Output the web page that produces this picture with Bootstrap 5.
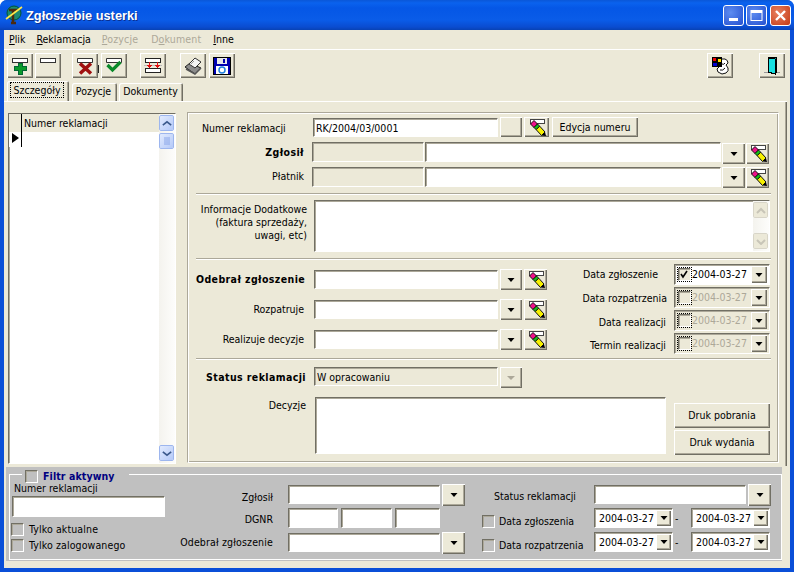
<!doctype html>
<html lang="pl"><head><meta charset="utf-8"><title>Zgłoszebie usterki</title>
<link href="https://cdn.jsdelivr.net/npm/bootstrap@5.3.0/dist/css/bootstrap.min.css" rel="stylesheet">
<style>
html,body{margin:0;width:794px;height:572px;overflow:hidden;background:#fff}
body{font:10.5px/13px "DejaVu Sans Condensed","Liberation Sans",sans-serif;color:#000;white-space:nowrap}
.okno{width:794px;height:572px;background:#0a4fd8;border-radius:7px 7px 0 0;overflow:hidden}
.pasek{height:30px;background:linear-gradient(#0a57d8 0,#0a62ee 3px,#0557e6 8px,#0a5ce8 20px,#0a4cd0 27px,#0842b4 30px);color:#fff;font:bold 13px "Liberation Sans",sans-serif;padding:0 3px 0 5px;text-shadow:1px 1px #0a2f90}
.pasek span{margin-left:3px;font-size:12.8px}
.okbtn{width:21px;height:21px;border:1px solid #fff;border-radius:3px;background:radial-gradient(circle at 35% 35%,#5d8cf0,#2450d0);margin-left:2px;padding:0;display:block}
.okbtn.zam{background:radial-gradient(circle at 35% 35%,#e8805f,#c43a14);margin-left:3px}
.klient{margin:0 4px;height:538px;background:#ece9d8}
.menu{height:20px;border-bottom:1px solid #fff;padding-left:5px;gap:11px}
.menu u{text-underline-offset:1px}
.menu .wyl{color:#aca899;letter-spacing:.15px}
.menu .mdok{margin-left:2px}.menu .minn{margin-left:1px}
.narz{height:31px;padding:3px 5px 0 3px}
.w95.btn{display:flex;align-items:center;justify-content:center;padding:0;border:0;border-radius:0;background:#ece9d8;color:#000;font:inherit;box-shadow:inset 1px 1px #fff,inset -1px -1px #716f64,inset -2px -2px #aca899}
.tb.btn{width:26px;height:25px}
.sp1{margin-left:2px}.sp2{margin-left:11px}.sp3{margin-left:13px}.sp4{margin-left:14px}.sp5{margin-left:3px}.sp6{margin-left:26px}
.kreska{width:1px;height:8px;background:#222;margin:4px 2px 0 0;align-self:center}
.zak{height:20px;padding-left:3px;border:0;position:relative;z-index:2}
.zak .nav-link{height:18px;margin:2px 2px 0 0;padding:2px 0;text-align:center;border:0;border-radius:2px 2px 0 0;color:#000;background:#ece9d8;box-shadow:inset 1px 1px #fff,inset -1px 0 #716f64,inset -2px 0 #aca899}
.zak .t2{width:45px;padding-right:2px}.zak .t3{width:64px;padding-right:1px}
.zak .nav-link.active{height:20px;margin:0 3px -1px 0;padding:3px 2px 0 0;width:62px;background:#ece9d8;color:#000;box-shadow:inset 1px 1px #fff,inset -1px 0 #716f64,inset -2px 0 #aca899}
.zak .nav-link.active span{outline:1px dotted #000;padding:1px 3px}
.arkusz{height:365px;margin-right:3px;border-top:1px solid #fff;box-shadow:inset -1px 0 #716f64,inset -2px 0 #aca899;padding:10px 0 0 4px}
.siatka{width:168px;height:351px;margin-top:1px;background:#fff;border:1px solid;border-color:#716f64 #fff #fff #716f64;box-shadow:inset 1px 1px #aca899}
.wsk{width:13px;border-right:1px solid #000;height:33px;flex:none;padding:19px 0 0 3px;background:linear-gradient(#ece9d8 18px,#fff 18px)}
.wsk i{display:block;width:0;height:0;border:5px solid transparent;border-left:7px solid #000;border-right:0}
.tyt{height:18px;padding:3px 0 0 2px;background:#ece9d8;flex:1}
.pas{width:16px;flex:none;background:linear-gradient(90deg,#f4f3ee,#fdfdfb);height:100%;padding-top:1px}
.sb{width:15px;height:16px;background:linear-gradient(135deg,#e2ebfe,#b4c9f8);border:1px solid #fff;outline:1px solid #9db6ee;outline-offset:-1px;border-radius:2px;display:flex;align-items:center;justify-content:center;margin-bottom:2px}
.sb.szary{background:#ece9d8;outline-color:#d8d5c8}
.panel{width:592px;height:351px;margin-left:11px;border:1px solid;border-color:#aca899 #fff #fff #aca899;box-shadow:inset 1px 1px #fff,inset -1px -1px #aca899;padding:0 8px}
.et{width:108px;flex:none;text-align:right}
.gr{font-weight:700;letter-spacing:.4px}
.pole.form-control{height:19px;min-height:0;padding:1px 2px;border-radius:0;border:1px solid;border-color:#716f64 #fff #fff #716f64;box-shadow:inset 1px 1px #aca899;background:#fff;font:inherit;color:#000;flex:none}
.pole.szare.form-control{background:#ece9d8}
.rn{margin-top:4px;height:20px}
.rz{margin-top:5px;height:22px}.rp{margin-top:3px;height:21px}
.sep{height:2px;background:#aca899;border-bottom:1px solid #fff;width:575px}
.s1{margin-top:5px}.s2{margin-top:6px}.s3{margin-top:4px}
.ri{margin-top:5px;height:52px}
.obsz{flex:none;border:1px solid;border-color:#716f64 #fff #fff #716f64;box-shadow:inset 1px 1px #aca899;background:#fff}
.trzy{height:90px;margin-top:4px}
.l3{padding-top:5px;gap:9px}
.wr{height:21px}
.d4{gap:2px;width:208px}
.dw{height:21px}
.dlb{flex:1;text-align:right;padding-right:8px;align-self:flex-start}
.dat{width:96px;height:21px;background:#fff;border:1px solid;border-color:#716f64 #fff #fff #716f64;box-shadow:inset 1px 1px #aca899;padding:2px 2px 2px 3px;flex:none}
.dat.off{background:#ece9d8;color:#aca899}
.dat .txt{flex:1;padding-left:1px}
.fc.form-check-input{width:13px;height:13px;margin:0;flex:none;border:1px solid;border-color:#716f64 #fff #fff #716f64;box-shadow:inset 1px 1px #aca899;border-radius:0;background:#ece9d8 none;opacity:1}
.fc.zazn.form-check-input:checked{background:#ece9d8 url("data:image/svg+xml,%3Csvg xmlns='http://www.w3.org/2000/svg' viewBox='0 0 11 11'%3E%3Cpath d='M2 5l2 3 4-6' fill='none' stroke='%23000' stroke-width='1.6'/%3E%3C/svg%3E") center/11px no-repeat}
.kropki{outline:1px dotted #000;outline-offset:0}
.dat .w95.btn{width:16px;height:17px}
.rs{margin-top:7px;height:22px}
.rd{margin-top:8px;height:59px}
.druk.btn{width:96px;height:25px}
.drcol{gap:2px;padding-top:6px;margin-left:8px}
.filtr{height:94px;margin:1px 8px 0 2px;background:#c0c0c0;padding:7px 0 0 3px;position:relative}
.grupa{height:86px;border:1px solid #fff;padding-left:2px}
.leg{position:absolute;left:16px;top:3px;background:#c0c0c0;padding:0 14px 0 3px;height:13px;color:#000080;font-weight:700;letter-spacing:.1px}
.leg .fc{margin-right:5px}
.k1{width:168px;padding-top:7px}
.k1 .pole.form-control{width:153px;height:21px;margin:0 0 6px 0}
.wl{height:13px;margin:0 0 3px -1px;gap:5px;letter-spacing:.12px}
.filtr .fc.form-check-input{background:#c0c0c0}
.k2{width:285px;padding-top:9px;margin-right:17px}
.fw{height:24px}
.fl{width:93px;flex:none;text-align:right;margin-right:15px}
.fl3{letter-spacing:.15px}
.k3{padding-top:9px;width:289px}
.f2{height:20px}
.fb.btn{width:23px;height:22px}
.dfil{width:79px;height:20px;background:#fff;border:1px solid;border-color:#716f64 #fff #fff #716f64;box-shadow:inset 1px 1px #aca899;padding:2px 1px 2px 4px;flex:none}
.dfil .w95.btn{width:15px;height:16px}
.dfil .txt{flex:1}
.myk{width:18px;flex:none;padding:4px 0 0 2px}
.fd{width:112px;flex:none;gap:4px;padding-top:6px}
svg{display:block;flex:none}
.nm1{width:185px;margin:1px 2px 0 9px}.nb1.btn{width:22px;height:20px;margin-right:2px}.nb2.btn{width:25px;height:20px;margin-right:3px}.nb3.btn{width:86px;height:20px}
.g1{width:112px;margin-left:8px;height:20px!important}.g2{width:296px;margin:0 1px;height:20px!important}.pd.btn{width:23px;height:21px;margin-right:1px}
.rz .pd.btn{margin-top:1px}
.inf{width:111px;padding-top:3px}.ta{width:456px;height:52px;margin-left:7px}
.w1{width:184px;margin:1px 2px 0 10px}.ww1.btn{width:22px;height:21px;margin-right:2px}.ww2.btn{width:23px;height:21px}
.od{padding-top:4px}.st{padding-top:4px;width:110px}.stp.form-control{margin:0 2px 0 8px}.dc{width:110px;padding-top:2px}.dz{width:351px;height:57px;margin-left:9px}
.nrl{height:14px;padding-left:2px}.fi{width:152px;margin:1px 2px 0 0;height:19px!important}.f1{width:50px;margin-right:3px;height:20px!important}.f3{width:51px;margin-right:3px;height:20px!important}.f4{width:45px;height:20px!important}
.st3{width:112px;padding:6px 0 0 12px;flex:none}.mt3{margin-top:4px}
.lbn{padding:5px 0 0 6px}.lz{padding-top:4px}.lp{padding-top:3px}
.p1{padding:4px 16px 0 0}.p2{padding:5px 7px 0 0}.p3{padding-top:6px}.p4{padding-top:6px}
.fl1{padding-top:7px}.fl2{padding-top:5px}.fl3{padding-top:4px}
</style></head><body>
<svg width="0" height="0" style="position:absolute"><defs>
<symbol id="ow" viewBox="0 0 7 4"><path d="M0 0h7L3.500 4z" fill="#000"/></symbol>
<symbol id="olowek" viewBox="0 0 18 17">
<path d="M2.500.500h14v4h-14z" fill="#fff" stroke="#444" shape-rendering="crispEdges"/>
<path d="M2.500 5l3.500-3.500L9.500 5 6 8.500z" fill="#f0108a" stroke="#111"/>
<path d="M6 8.500L9.500 5l2.200 2.200-3.500 3.500z" fill="#16c016" stroke="#111"/>
<path d="M8.200 10.700l3.500-3.500L17 13l-3.500 3.500z" fill="#f6f000" stroke="#111"/>
<path d="M13.500 16.500L17 13l1 4z" fill="#000"/></symbol>
<symbol id="pasb" viewBox="0 0 20 18"><path d="M2.500 1.500h15v4h-15z" fill="#fff" stroke="#333"/></symbol>
<symbol id="cd" viewBox="0 0 12 8"><path d="M1 6l5-4 5 4" fill="none" stroke="#3c5a8c" stroke-width="2"/></symbol>
<symbol id="cg" viewBox="0 0 12 8"><path d="M1 2l5 4 5-4" fill="none" stroke="#3c5a8c" stroke-width="2"/></symbol>
</defs></svg>
<div class="okno d-flex flex-column">
<div class="pasek d-flex align-items-center">
<svg width="18" height="20" viewBox="0 0 18 20"><circle cx="9" cy="8" r="7" fill="#1c8a70" stroke="#053"/><path d="M4 5h9M8 5v13M6 18h5" stroke="#4a2a10" stroke-width="2.500" fill="none"/><path d="M1 14L17 2" stroke="#ffe84a" stroke-width="1.600"/></svg>
<span>Zgłoszebie usterki</span>
<div class="d-flex ms-auto">
<button class="okbtn d-flex align-items-end justify-content-center" aria-label="min"><svg width="10" height="6" class="mb-1"><rect y="3" width="9" height="3" fill="#fff"/></svg></button>
<button class="okbtn d-flex align-items-center justify-content-center" aria-label="max"><svg width="13" height="13"><rect x="1" y="1.500" width="11" height="10" fill="none" stroke="#fff"/><rect x="1" y="1" width="11" height="3" fill="#fff"/></svg></button>
<button class="okbtn zam d-flex align-items-center justify-content-center" aria-label="zamknij"><svg width="13" height="13"><path d="M2 2l9 9M11 2l-9 9" stroke="#fff" stroke-width="2.400"/></svg></button>
</div></div>
<div class="klient">
<div class="menu d-flex align-items-center">
<span><u>P</u>lik</span><span><u>R</u>eklamacja</span><span class="wyl"><u>P</u>ozycje</span><span class="wyl mdok">D<u>o</u>kument</span><span class="minn"><u>I</u>nne</span>
</div>
<div class="narz d-flex">
<button class="w95 btn tb" aria-label="dodaj"><svg width="20" height="18" viewBox="0 0 20 18" shape-rendering="crispEdges"><use href="#pasb"/><path d="M8 6h4v3h4v4h-4v4H8v-4H4V9h4z" fill="#0a9a2a" stroke="#063"/></svg></button>
<button class="w95 btn tb sp1" aria-label="usuń"><svg width="20" height="18" viewBox="0 0 20 18" shape-rendering="crispEdges"><use href="#pasb"/></svg></button>
<button class="w95 btn tb sp2" aria-label="anuluj"><svg width="20" height="18" viewBox="0 0 20 18"><use href="#pasb"/><path d="M5 6.500l11 10M16 6.500L5 16.500" stroke="#a01010" stroke-width="3.500"/></svg></button>
<i class="kreska"></i>
<button class="w95 btn tb" aria-label="zatwierdź"><svg width="20" height="18" viewBox="0 0 20 18"><use href="#pasb"/><path d="M3.500 8l5 5 8-8" fill="none" stroke="#0a8a2a" stroke-width="3.200"/></svg></button>
<button class="w95 btn tb sp3" aria-label="wstaw"><svg width="18" height="18" viewBox="0 0 18 18" shape-rendering="crispEdges"><path d="M1.500 1.500h15v4h-15zM1.500 11.500h15v4h-15z" fill="#fff" stroke="#222"/><path d="M0 8.500h18" stroke="#bbb"/><path d="M5.500 5v6M13.500 5v6M3 8.500h5M11 8.500h5M4 9.500h3M12 9.500h3" stroke="#e01010"/></svg></button>
<button class="w95 btn tb sp4" aria-label="drukuj"><svg width="18" height="18" viewBox="0 0 18 18"><path d="M1 10l5-4 11 5-6 6z" fill="#8c8c8c" stroke="#222"/><path d="M5 7l6-6 6 4-6 6z" fill="#f4f4f4" stroke="#333"/><path d="M2 12l9 5 6-6" fill="none" stroke="#555" stroke-width="1.500"/><path d="M6 8l4-4" stroke="#999"/></svg></button>
<button class="w95 btn tb sp5" aria-label="zapisz"><svg width="18" height="18" viewBox="0 0 18 18" shape-rendering="crispEdges"><path d="M.5.500h17v17H.5z" fill="#0000b0" stroke="#000"/><path d="M4 1h10v6H4z" fill="#e8e8e8"/><path d="M10 2h2v4h-2z" fill="#0000b0"/><path d="M3 9h12v8H3z" fill="#fff"/><circle cx="9" cy="13" r="3" fill="none" stroke="#2080e0" stroke-width="1.500" shape-rendering="auto"/></svg></button>
<button class="w95 btn tb ms-auto" aria-label="telefon"><svg width="17" height="19" viewBox="0 0 17 19"><path d="M9 3h4q3 1 3 4l-2 2 2 3q1 3-2 5l-4 1-4-2-1-3 3-3" fill="#fff" stroke="#111"/><path d="M8 14q3 1 5-2M10 8q2 1 3-1" fill="none" stroke="#111"/><path d="M0 1h10v10H0z" fill="#000"/><path d="M1 2h3v3H1z" fill="#ee0000"/><path d="M6 3h3v3H6z" fill="#ffe000"/><path d="M1 7h4v3H1z" fill="#0000d0"/></svg></button>
<button class="w95 btn tb sp6" aria-label="wyjście"><svg width="18" height="19" viewBox="0 0 18 19" shape-rendering="crispEdges"><path d="M1 16.500h16" stroke="#999"/><path d="M5 1h8v15H5z" fill="#0f8f8f" stroke="#000"/><path d="M5 2l7 1v15l-7-2z" fill="#18e0e0" stroke="#000"/></svg></button>
</div>
<ul class="nav nav-tabs zak">
<li class="nav-item"><a class="nav-link active" href="#"><span>Szczegóły</span></a></li>
<li class="nav-item"><a class="nav-link t2" href="#">Pozycje</a></li>
<li class="nav-item"><a class="nav-link t3" href="#">Dokumenty</a></li>
</ul>
<div class="arkusz d-flex">
<div class="siatka d-flex">
<div class="d-flex flex-grow-1 align-items-start">
<div class="wsk"><i></i></div><div class="tyt">Numer reklamacji</div>
</div>
<div class="pas d-flex flex-column">
<div class="sb"><svg width="10" height="7"><use href="#cd"/></svg></div>
<div class="sb"><svg width="8" height="8"><path d="M1 1h6M1 3h6M1 5h6M1 7h6" stroke="#8aa6e8"/></svg></div>
<div class="sb mt-auto"><svg width="10" height="7"><use href="#cg"/></svg></div>
</div></div>
<div class="panel">
<div class="d-flex rn">
<div class="et text-start lbn">Numer reklamacji</div>
<input class="pole form-control nm1" value="RK/2004/03/0001" aria-label="Numer">
<button class="w95 btn nb1" aria-label="-"></button>
<button class="w95 btn nb2" aria-label="ołówek"><svg width="18" height="17"><use href="#olowek"/></svg></button>
<button class="w95 btn nb3">Edycja numeru</button>
</div>
<div class="d-flex rz">
<div class="et gr lz">Zgłosił</div>
<input class="pole szare form-control g1" aria-label="kod"><input class="pole form-control g2" aria-label="Zgłosił">
<button class="w95 btn pd" aria-label="rozwiń"><svg width="8" height="4"><use href="#ow"/></svg></button>
<button class="w95 btn pd" aria-label="ołówek"><svg width="18" height="17"><use href="#olowek"/></svg></button>
</div>
<div class="d-flex rp">
<div class="et lp">Płatnik</div>
<input class="pole szare form-control g1" aria-label="kod"><input class="pole form-control g2" aria-label="Płatnik">
<button class="w95 btn pd" aria-label="rozwiń"><svg width="8" height="4"><use href="#ow"/></svg></button>
<button class="w95 btn pd" aria-label="ołówek"><svg width="18" height="17"><use href="#olowek"/></svg></button>
</div>
<div class="sep s1"></div>
<div class="d-flex ri">
<div class="et inf">Informacje Dodatkowe<br>(faktura sprzedaży,<br>uwagi, etc)</div>
<div class="obsz d-flex justify-content-end ta">
<div class="pas d-flex flex-column"><div class="sb szary"><svg width="10" height="7"><path d="M1 6l4-4 4 4" fill="none" stroke="#c8c5b8" stroke-width="2"/></svg></div><div class="sb szary mt-auto"><svg width="10" height="7"><path d="M1 2l4 4 4-4" fill="none" stroke="#c8c5b8" stroke-width="2"/></svg></div></div>
</div></div>
<div class="sep s2"></div>
<div class="d-flex trzy">
<div class="d-flex flex-column l3">
<div class="d-flex wr"><div class="et gr od">Odebrał zgłoszenie</div><input class="pole form-control w1" aria-label="Odebrał"><button class="w95 btn ww1" aria-label="rozwiń"><svg width="8" height="4"><use href="#ow"/></svg></button><button class="w95 btn ww2" aria-label="ołówek"><svg width="18" height="17"><use href="#olowek"/></svg></button></div>
<div class="d-flex wr"><div class="et od">Rozpatruje</div><input class="pole form-control w1" aria-label="Rozpatruje"><button class="w95 btn ww1" aria-label="rozwiń"><svg width="8" height="4"><use href="#ow"/></svg></button><button class="w95 btn ww2" aria-label="ołówek"><svg width="18" height="17"><use href="#olowek"/></svg></button></div>
<div class="d-flex wr"><div class="et od">Realizuje decyzje</div><input class="pole form-control w1" aria-label="Realizuje"><button class="w95 btn ww1" aria-label="rozwiń"><svg width="8" height="4"><use href="#ow"/></svg></button><button class="w95 btn ww2" aria-label="ołówek"><svg width="18" height="17"><use href="#olowek"/></svg></button></div>
</div>
<div class="d-flex flex-column d4 ms-auto">
<div class="d-flex dw"><div class="dlb p1">Data zgłoszenie</div><div class="dat d-flex align-items-center"><input class="fc zazn kropki form-check-input" type="checkbox" checked aria-label="x"><span class="txt">2004-03-27</span><button class="w95 btn" aria-label="rozwiń"><svg width="8" height="4"><use href="#ow"/></svg></button></div></div>
<div class="d-flex dw"><div class="dlb p2">Data rozpatrzenia</div><div class="dat off d-flex align-items-center"><input class="fc kropki form-check-input" type="checkbox" aria-label="x"><span class="txt">2004-03-27</span><button class="w95 btn" aria-label="rozwiń"><svg width="8" height="4"><use href="#ow"/></svg></button></div></div>
<div class="d-flex dw"><div class="dlb p3">Data realizacji</div><div class="dat off d-flex align-items-center"><input class="fc kropki form-check-input" type="checkbox" aria-label="x"><span class="txt">2004-03-27</span><button class="w95 btn" aria-label="rozwiń"><svg width="8" height="4"><use href="#ow"/></svg></button></div></div>
<div class="d-flex dw"><div class="dlb p4">Termin realizacji</div><div class="dat off d-flex align-items-center"><input class="fc kropki form-check-input" type="checkbox" aria-label="x"><span class="txt">2004-03-27</span><button class="w95 btn" aria-label="rozwiń"><svg width="8" height="4"><use href="#ow"/></svg></button></div></div>
</div></div>
<div class="sep s3"></div>
<div class="d-flex rs">
<div class="et gr st">Status reklamacji</div>
<input class="pole szare form-control w1 stp" value="W opracowaniu" aria-label="Status">
<button class="w95 btn ww1" aria-label="rozwiń"><svg width="8" height="4"><path d="M0 0h8L4 4z" fill="#aca899"/></svg></button>
</div>
<div class="d-flex rd">
<div class="et dc">Decyzje</div>
<div class="obsz dz"></div>
<div class="d-flex flex-column drcol">
<button class="w95 btn druk">Druk pobrania</button>
<button class="w95 btn druk">Druk wydania</button>
</div></div>
</div>
</div>
<div class="filtr">
<div class="leg d-flex align-items-center"><input class="fc form-check-input" type="checkbox" aria-label="Filtr"><span>Filtr aktywny</span></div>
<div class="grupa d-flex">
<div class="k1"><div class="nrl">Numer reklamacji</div>
<input class="pole form-control" aria-label="Numer">
<div class="d-flex wl align-items-center"><input class="fc form-check-input" type="checkbox" aria-label="a"><span>Tylko aktualne</span></div>
<div class="d-flex wl align-items-center"><input class="fc form-check-input" type="checkbox" aria-label="b"><span>Tylko zalogowanego</span></div>
</div>
<div class="k2">
<div class="d-flex fw"><div class="fl fl1">Zgłosił</div><input class="pole form-control fi" aria-label="z"><button class="w95 btn fb" aria-label="rozwiń"><svg width="8" height="4"><use href="#ow"/></svg></button></div>
<div class="d-flex fw"><div class="fl fl2">DGNR</div><input class="pole form-control f1" aria-label="a"><input class="pole form-control f3" aria-label="b"><input class="pole form-control f4" aria-label="c"></div>
<div class="d-flex fw"><div class="fl fl3">Odebrał zgłoszenie</div><input class="pole form-control fi" aria-label="o"><button class="w95 btn fb" aria-label="rozwiń"><svg width="8" height="4"><use href="#ow"/></svg></button></div>
</div>
<div class="k3">
<div class="d-flex fw"><div class="st3">Status reklamacji</div><input class="pole form-control fi" aria-label="s"><button class="w95 btn fb" aria-label="rozwiń"><svg width="8" height="4"><use href="#ow"/></svg></button></div>
<div class="d-flex f2"><div class="d-flex fd align-items-center"><input class="fc form-check-input" type="checkbox" aria-label="d"><span>Data zgłoszenia</span></div><div class="dfil d-flex align-items-center"><span class="txt">2004-03-27</span><button class="w95 btn" aria-label="r"><svg width="8" height="4"><use href="#ow"/></svg></button></div><div class="myk">-</div><div class="dfil d-flex align-items-center"><span class="txt">2004-03-27</span><button class="w95 btn" aria-label="r"><svg width="8" height="4"><use href="#ow"/></svg></button></div></div>
<div class="d-flex f2 mt3"><div class="d-flex fd align-items-center"><input class="fc form-check-input" type="checkbox" aria-label="d"><span>Data rozpatrzenia</span></div><div class="dfil d-flex align-items-center"><span class="txt">2004-03-27</span><button class="w95 btn" aria-label="r"><svg width="8" height="4"><use href="#ow"/></svg></button></div><div class="myk">-</div><div class="dfil d-flex align-items-center"><span class="txt">2004-03-27</span><button class="w95 btn" aria-label="r"><svg width="8" height="4"><use href="#ow"/></svg></button></div></div>
</div></div></div>
</div></div>
</body></html>
